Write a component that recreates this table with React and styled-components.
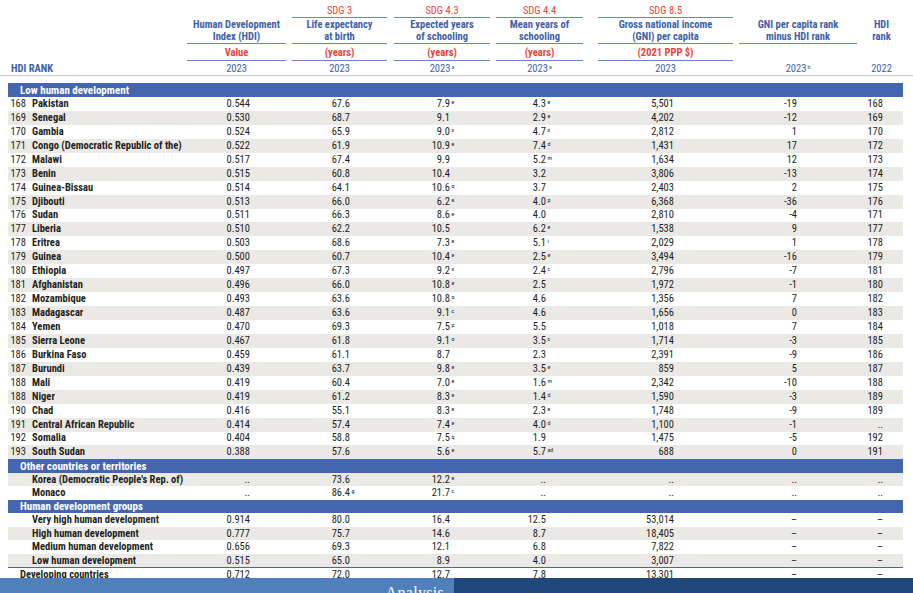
import React from "react";
import styled, { createGlobalStyle } from "styled-components";

const GlobalStyle = createGlobalStyle`
  html, body {
    margin: 0;
    padding: 0;
    background: #ffffff;
    overflow: hidden;
  }
  body {
    font-family: Roboto, "Open Sans", "Liberation Sans", sans-serif;
    font-stretch: 78%;
    color: #231f20;
  }
`;

// column widths shared by header and rows (table runs x 8 -> 903)
const COLS = "176px 105px 101px 103px 93px 150px 124px 43px";

const BLUE = "#4466ae";
const TEXT_BLUE = "#3d5fa8";
const RED = "#ef4136";
const RULE = "#6686c6";
const STRIPE = "#ebe9e5";

const headCols = [
  { title: ["Human Development", "Index (HDI)"], unit: "Value", year: "2023" },
  { sdg: "SDG 3", title: ["Life expectancy", "at birth"], unit: "(years)", year: "2023" },
  { sdg: "SDG 4.3", title: ["Expected years", "of schooling"], unit: "(years)", year: "2023", sup: "a", inset: 4 },
  { sdg: "SDG 4.4", title: ["Mean years of", "schooling"], unit: "(years)", year: "2023", sup: "a" },
  { sdg: "SDG 8.5", title: ["Gross national income", "(GNI) per capita"], unit: "(2021 PPP $)", year: "2023", inset: 12 },
  { title: ["GNI per capita rank", "minus HDI rank"], year: "2023", sup: "b" },
  { title: ["HDI", "rank"], year: "2022", noLine: true },
];

// right padding of each data column (before the superscript slot)
const PADS = [30, 31, 34, 31, 53, 54, 11];

const low = [
  ["168", "Pakistan", "0.544", "67.6", ["7.9", "e"], ["4.3", "e"], "5,501", "-19", "168"],
  ["169", "Senegal", "0.530", "68.7", "9.1", ["2.9", "e"], "4,202", "-12", "169"],
  ["170", "Gambia", "0.524", "65.9", ["9.0", "x"], ["4.7", "x"], "2,812", "1", "170"],
  ["171", "Congo (Democratic Republic of the)", "0.522", "61.9", ["10.9", "e"], ["7.4", "d"], "1,431", "17", "172"],
  ["172", "Malawi", "0.517", "67.4", "9.9", ["5.2", "m"], "1,634", "12", "173"],
  ["173", "Benin", "0.515", "60.8", "10.4", "3.2", "3,806", "-13", "174"],
  ["174", "Guinea-Bissau", "0.514", "64.1", ["10.6", "o"], "3.7", "2,403", "2", "175"],
  ["175", "Djibouti", "0.513", "66.0", ["6.2", "e"], ["4.0", "p"], "6,368", "-36", "176"],
  ["176", "Sudan", "0.511", "66.3", ["8.6", "e"], "4.0", "2,810", "-4", "171"],
  ["177", "Liberia", "0.510", "62.2", "10.5", ["6.2", "e"], "1,538", "9", "177"],
  ["178", "Eritrea", "0.503", "68.6", ["7.3", "e"], ["5.1", "i"], "2,029", "1", "178"],
  ["179", "Guinea", "0.500", "60.7", ["10.4", "e"], ["2.5", "e"], "3,494", "-16", "179"],
  ["180", "Ethiopia", "0.497", "67.3", ["9.2", "x"], ["2.4", "c"], "2,796", "-7", "181"],
  ["181", "Afghanistan", "0.496", "66.0", ["10.8", "e"], "2.5", "1,972", "-1", "180"],
  ["182", "Mozambique", "0.493", "63.6", ["10.8", "o"], "4.6", "1,356", "7", "182"],
  ["183", "Madagascar", "0.487", "63.6", ["9.1", "c"], "4.6", "1,656", "0", "183"],
  ["184", "Yemen", "0.470", "69.3", ["7.5", "p"], "5.5", "1,018", "7", "184"],
  ["185", "Sierra Leone", "0.467", "61.8", ["9.1", "o"], ["3.5", "c"], "1,714", "-3", "185"],
  ["186", "Burkina Faso", "0.459", "61.1", "8.7", "2.3", "2,391", "-9", "186"],
  ["187", "Burundi", "0.439", "63.7", ["9.8", "e"], ["3.5", "e"], "859", "5", "187"],
  ["188", "Mali", "0.419", "60.4", ["7.0", "e"], ["1.6", "m"], "2,342", "-10", "188"],
  ["188", "Niger", "0.419", "61.2", ["8.3", "e"], ["1.4", "d"], "1,590", "-3", "189"],
  ["190", "Chad", "0.416", "55.1", ["8.3", "e"], ["2.3", "e"], "1,748", "-9", "189"],
  ["191", "Central African Republic", "0.414", "57.4", ["7.4", "e"], ["4.0", "d"], "1,100", "-1", ".."],
  ["192", "Somalia", "0.404", "58.8", ["7.5", "q"], "1.9", "1,475", "-5", "192"],
  ["193", "South Sudan", "0.388", "57.6", ["5.6", "e"], ["5.7", "ad"], "688", "0", "191"],
];

const other = [
  ["", "Korea (Democratic People's Rep. of)", "..", "73.6", ["12.2", "e"], "..", "..", "..", ".."],
  ["", "Monaco", "..", ["86.4", "g"], ["21.7", "c"], "..", "..", "..", ".."],
];

const groups = [
  ["", "Very high human development", "0.914", "80.0", "16.4", "12.5", "53,014", "–", "–"],
  ["", "High human development", "0.777", "75.7", "14.6", "8.7", "18,405", "–", "–"],
  ["", "Medium human development", "0.656", "69.3", "12.1", "6.8", "7,822", "–", "–"],
  ["", "Low human development", "0.515", "65.0", "8.9", "4.0", "3,007", "–", "–"],
];

const developing = ["", "Developing countries", "0.712", "72.0", "12.7", "7.8", "13,301", "–", "–"];

const App = () => {
  return (
    <>
      <GlobalStyle />
      <Page>
        <Header>
          <HeadGrid>
            <HeadCol>
              <SdgSlot />
              <TitleSlot $noLine />
              <UnitSlot />
              <YearSlot $left>HDI RANK</YearSlot>
            </HeadCol>
            {headCols.map((c) => (
              <HeadCol key={c.title[0]} $inset={c.inset || 3}>
                <SdgSlot $line={!!c.sdg}>{c.sdg}</SdgSlot>
                <TitleSlot $noLine={c.noLine}>
                  <span>{c.title[0]}</span>
                  <span>{c.title[1]}</span>
                </TitleSlot>
                <UnitSlot $line={!!c.unit}>{c.unit}</UnitSlot>
                <YearSlot>
                  {c.year}
                  {c.sup && <YearSup>{c.sup}</YearSup>}
                </YearSlot>
              </HeadCol>
            ))}
          </HeadGrid>
        </Header>

        <Table>
          <GroupBar $h={14}>Low human development</GroupBar>
          {low.map((r, i) => (
            <DataRow key={r[1]} row={r} striped={i % 2 === 1} h={13.95} />
          ))}
          <GroupBar $h={13.5}>Other countries or territories</GroupBar>
          {other.map((r, i) => (
            <DataRow key={r[1]} row={r} striped={i % 2 === 0} h={13.5} />
          ))}
          <GroupBar $h={13.5}>Human development groups</GroupBar>
          {groups.map((r, i) => (
            <DataRow key={r[1]} row={r} striped={i % 2 === 1} h={13.5} />
          ))}
          <DataRow row={developing} h={13.5} flush topRule />
        </Table>
      </Page>

      <BottomStrip>
        <StripLeft>Analysis</StripLeft>
        <StripRight />
      </BottomStrip>
    </>
  );
};

const DataRow = ({ row, striped, h, flush, topRule }) => {
  const [rank, name, ...vals] = row;
  return (
    <Row $striped={striped} $h={h} $topRule={topRule}>
      <NameCell>
        {!flush && <Rank>{rank}</Rank>}
        <Name $flush={flush}>{name}</Name>
      </NameCell>
      {vals.map((v, i) => {
        const [num, sup] = Array.isArray(v) ? v : [v, null];
        return (
          <Cell key={i} $pad={PADS[i]}>
            <span>{num}</span>
            <Sup>{sup}</Sup>
          </Cell>
        );
      })}
    </Row>
  );
};

const Page = styled.div`
  width: 913px;
  height: 593px;
  overflow: hidden;
`;

const Header = styled.div`
  border-bottom: 1px solid #cfcdca;
`;

const HeadGrid = styled.div`
  display: grid;
  grid-template-columns: ${COLS};
  margin-left: 8px;
  width: 895px;
`;

const HeadCol = styled.div`
  display: flex;
  flex-direction: column;
  padding: 0 3px 0 ${(p) => p.$inset || 3}px;
  text-align: center;
  font-size: 10.5px;
`;

const SdgSlot = styled.div`
  height: 18px;
  box-sizing: border-box;
  display: flex;
  align-items: flex-end;
  justify-content: center;
  padding-bottom: 1px;
  color: ${RED};
  line-height: 11px;
  border-bottom: 1px solid ${(p) => (p.$line ? RULE : "transparent")};
`;

const TitleSlot = styled.div`
  height: 26px;
  box-sizing: border-box;
  display: flex;
  flex-direction: column;
  justify-content: center;
  align-items: center;
  color: ${TEXT_BLUE};
  font-weight: 700;
  line-height: 11.3px;
  white-space: nowrap;
  border-bottom: 1px solid ${(p) => (p.$noLine ? "transparent" : RULE)};
`;

const UnitSlot = styled.div`
  height: 17px;
  box-sizing: border-box;
  display: flex;
  align-items: center;
  justify-content: center;
  color: ${RED};
  font-weight: 700;
  white-space: nowrap;
  border-bottom: 1px solid ${(p) => (p.$line ? RULE : "transparent")};
`;

const YearSlot = styled.div`
  height: 14px;
  display: flex;
  align-items: center;
  justify-content: ${(p) => (p.$left ? "flex-start" : "center")};
  color: ${TEXT_BLUE};
  font-weight: ${(p) => (p.$left ? 700 : 400)};
  white-space: nowrap;
`;

const YearSup = styled.span`
  font-size: 6px;
  align-self: flex-start;
  margin-top: 2px;
  margin-left: 1px;
`;

const Table = styled.div`
  margin: 7px 0 0 8px;
  width: 895px;
  display: flex;
  flex-direction: column;
`;

const GroupBar = styled.div`
  height: ${(p) => p.$h}px;
  display: flex;
  align-items: center;
  padding-left: 12px;
  background: ${BLUE};
  color: #ffffff;
  font-size: 11px;
  font-weight: 700;
`;

const Row = styled.div`
  display: grid;
  grid-template-columns: ${COLS};
  height: ${(p) => p.$h}px;
  background: ${(p) => (p.$striped ? STRIPE : "#ffffff")};
  border-top: ${(p) => (p.$topRule ? `1.5px solid ${BLUE}` : "none")};
  font-size: 10.5px;
  line-height: 12px;
`;

const NameCell = styled.div`
  display: flex;
  align-items: center;
  white-space: nowrap;
`;

const Rank = styled.span`
  flex-shrink: 0;
  width: 18px;
  text-align: right;
`;

const Name = styled.span`
  flex-shrink: 0;
  margin-left: ${(p) => (p.$flush ? 12 : 6)}px;
  font-weight: 700;
`;

const Cell = styled.div`
  display: flex;
  justify-content: flex-end;
  align-items: center;
  padding-right: ${(p) => p.$pad}px;
  white-space: nowrap;
`;

const Sup = styled.span`
  width: 9px;
  padding-left: 1.5px;
  box-sizing: border-box;
  font-size: 6px;
  line-height: 6px;
  align-self: flex-start;
  margin-top: 2px;
  text-align: left;
`;

const BottomStrip = styled.div`
  position: fixed;
  left: 0;
  right: 0;
  bottom: 0;
  height: 15px;
  display: grid;
  grid-template-columns: 454px 1fr;
  overflow: hidden;
`;

const StripLeft = styled.div`
  background: #4f80bb;
  color: #ffffff;
  font-family: "Liberation Serif", serif;
  font-stretch: normal;
  font-size: 16px;
  line-height: 16px;
  text-align: right;
  padding: 7px 10px 0 0;
  letter-spacing: 0.3px;
`;

const StripRight = styled.div`
  background: #1f477a;
`;

export default App;
